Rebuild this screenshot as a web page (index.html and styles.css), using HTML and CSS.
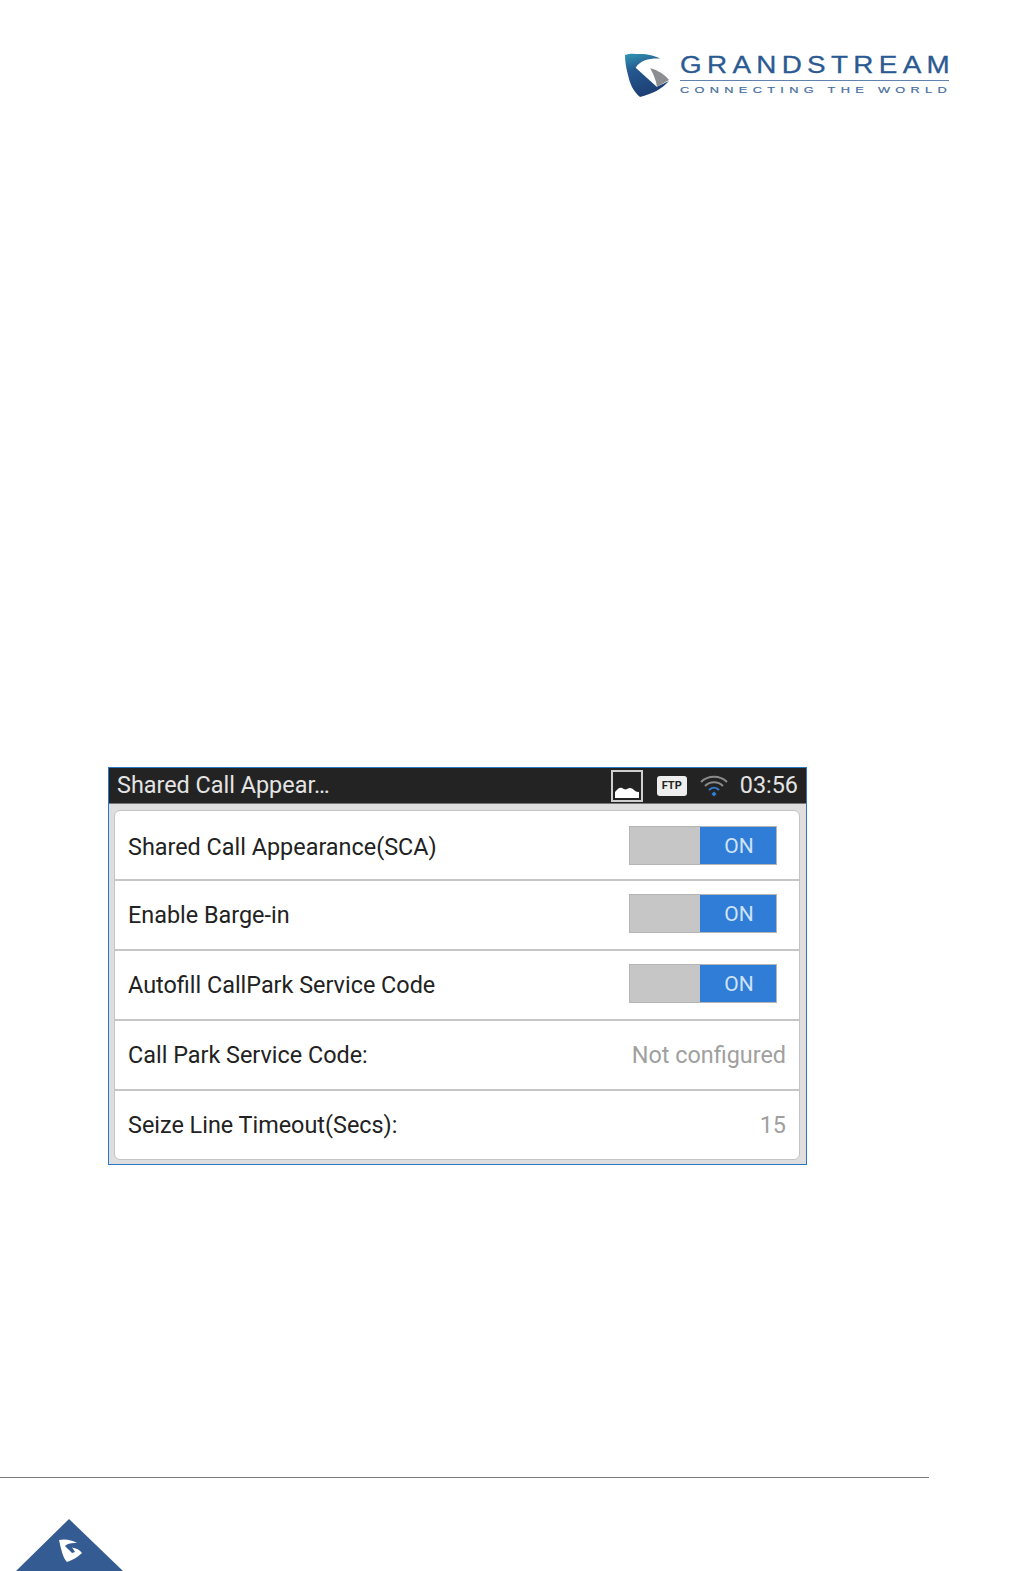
FILE: index.html
```html
<!DOCTYPE html>
<html lang="en">
<head>
    <meta charset="UTF-8">
    <title>Shared Call Appearance</title>
    <link rel="stylesheet" href="styles.css">
</head>
<body>
    <header class="page-header">
        <div class="logo">
            <svg class="logo-mark" width="46" height="48" viewBox="0 0 46 48">
                <defs>
                    <linearGradient id="markBlue" x1="0.2" y1="0" x2="0.5" y2="1">
                        <stop offset="0" stop-color="#2f8fae"/>
                        <stop offset="0.35" stop-color="#24588f"/>
                        <stop offset="1" stop-color="#1d3d72"/>
                    </linearGradient>
                </defs>
                <path d="M1 4 C6 2 11 3 16 3 C24 3 31 5 36 7.500 C26 7 16 9 11.700 16.700 L32.700 35.700 L45 30 C38 38 28 43 16 46 C9 40 6 33 4 24 C2 17 1 10 1 4 Z" fill="url(#markBlue)"/>
                <path d="M26 17.300 C34 19 41 24 45 29 L33 35.700 C32 29 29 22 26 17.300 Z" fill="#8b8d90"/>
            </svg>
            <div class="logo-text">
                <div class="logo-name"><span class="logo-name-text">GRANDSTREAM</span></div>
                <div class="logo-tag"><span class="logo-tag-text">CONNECTING THE WORLD</span></div>
            </div>
        </div>
    </header>

    <main class="content">
        <div class="phone-screen">
            <div class="status-bar">
                <span class="screen-title">Shared Call Appear…</span>
                <div class="status-icons">
                    <svg class="icon-picture" width="32" height="32" viewBox="0 0 32 32">
                        <rect x="1" y="1" width="30" height="30" fill="none" stroke="#cfcfcf" stroke-width="2"/>
                        <path d="M4 28 V22 C7 18 9 17 11 18 C13 19 14 20 16 19 C19 17 21 18 23 20 C25 22 27 22 28 22 V28 Z" fill="#fff"/>
                    </svg>
                    <span class="icon-ftp">FTP</span>
                    <svg class="icon-wifi" width="30" height="24" viewBox="0 0 30 24">
                        <path d="M2 8 C9 1 21 1 28 8" fill="none" stroke="#8a8a8a" stroke-width="2"/>
                        <path d="M6 12 C11 7 19 7 24 12" fill="none" stroke="#8a8a8a" stroke-width="2"/>
                        <path d="M10 16 C13 13 17 13 20 16" fill="none" stroke="#2f80d8" stroke-width="2"/>
                        <path d="M12.500 20 L15 17.500 L17.500 20 L15 22.500 Z" fill="#2f80d8"/>
                    </svg>
                    <span class="clock">03:56</span>
                </div>
            </div>
            <div class="settings-card">
                <div class="row">
                    <span class="row-label">Shared Call Appearance(SCA)</span>
                    <div class="toggle"><span class="toggle-on">ON</span></div>
                </div>
                <div class="row">
                    <span class="row-label">Enable Barge-in</span>
                    <div class="toggle"><span class="toggle-on">ON</span></div>
                </div>
                <div class="row">
                    <span class="row-label">Autofill CallPark Service Code</span>
                    <div class="toggle"><span class="toggle-on">ON</span></div>
                </div>
                <div class="row">
                    <span class="row-label">Call Park Service Code:</span>
                    <span class="row-value">Not configured</span>
                </div>
                <div class="row">
                    <span class="row-label">Seize Line Timeout(Secs):</span>
                    <span class="row-value">15</span>
                </div>
            </div>
        </div>
    </main>

    <footer class="page-footer">
        <svg class="footer-mark" width="107" height="52" viewBox="0 0 107 52">
            <path d="M53 0 L107 52 L0 52 Z" fill="#355c92"/>
            <path d="M43 21 C49 19.500 56 21 61 24 C56 23.500 51 24.500 49 27 C51 29 54 32 56 34 L59 33 C58 31 57 30 56 28.500 C60 29 64 31 66 34 C62 38 57 41 51 43 C47 39 45 30 43 21 Z" fill="#fff"/>
        </svg>
    </footer>
</body>
</html>
```

FILE: styles.css
```css
html, body {
    margin: 0;
    padding: 0;
    background: #fff;
}

body {
    width: 1015px;
    height: 1571px;
    overflow: hidden;
    display: flex;
    flex-direction: column;
    font-family: 'Roboto', sans-serif;
}

.page-header {
    display: flex;
    justify-content: flex-end;
    height: 767px;
    padding: 51px 66px 0 0;
    box-sizing: border-box;
}

.logo {
    display: flex;
    gap: 10px;
    align-items: flex-start;
    height: 50px;
}

.logo-text {
    width: 269px;
}

.logo-name {
    height: 29px;
    border-bottom: 1px solid #5f83ad;
    font-family: 'Liberation Sans', sans-serif;
    font-size: 23px;
    line-height: 29px;
    color: #2b5a92;
    white-space: nowrap;
}

.logo-name-text {
    display: inline-block;
    letter-spacing: 4.400px;
    transform: scaleX(1.21);
    transform-origin: left center;
    -webkit-text-stroke: 0.3px #2b5a92;
}

.logo-tag {
    margin-top: 3px;
    font-family: 'Liberation Sans', sans-serif;
    font-size: 8.500px;
    line-height: 13px;
    color: #4a6f9e;
    white-space: nowrap;
}

.logo-tag-text {
    display: inline-block;
    letter-spacing: 3.550px;
    transform: scaleX(1.5);
    transform-origin: left center;
    -webkit-text-stroke: 0.2px #4a6f9e;
}

.content {
    flex: 1;
    padding-left: 108px;
}

.phone-screen {
    width: 699px;
    height: 398px;
    box-sizing: border-box;
    border: 1px solid #2a78bd;
    background: #dedede;
}

.status-bar {
    height: 35px;
    background: #232323;
    border-bottom: 1px solid #777;
    display: flex;
    justify-content: space-between;
    align-items: center;
    padding: 0 8px 0 8px;
    color: #e4e4e4;
}

.screen-title {
    font-size: 23.400px;
    margin-top: -2px;
}

.status-icons {
    display: flex;
    align-items: center;
}

.icon-picture {
    margin-right: 14px;
}

.icon-ftp {
    width: 30px;
    height: 20px;
    line-height: 20px;
    margin-right: 12px;
    border-radius: 3px;
    background: #eee;
    color: #222;
    font-size: 11px;
    font-weight: 700;
    text-align: center;
}

.icon-wifi {
    margin-right: 11px;
}

.clock {
    font-size: 23.400px;
    margin-top: -2px;
}

.settings-card {
    margin: 6px 6px 0 5px;
    height: 350px;
    box-sizing: border-box;
    background: #fff;
    border: 1px solid #c4c4c4;
    border-radius: 6px;
}

.row {
    height: 70px;
    box-sizing: border-box;
    padding: 0 13px 0 13px;
    border-bottom: 2px solid #c6c6c6;
    display: flex;
    justify-content: space-between;
    align-items: center;
}

.row:last-child {
    height: 68px;
    border-bottom: none;
}

.row:first-child .row-label {
    margin-top: 3px;
}

.row + .row .toggle {
    margin-top: -3px;
}

.row-label {
    font-size: 23.400px;
    color: #222;
}

.row-value {
    font-size: 23.400px;
    color: #a0a0a0;
}

.toggle {
    width: 148px;
    height: 39px;
    margin-right: 9px;
    box-sizing: border-box;
    border: 1px solid #b5b5b5;
    background: #c6c6c6;
    display: flex;
    justify-content: flex-end;
}

.toggle-on {
    width: 76px;
    padding-left: 2px;
    box-sizing: border-box;
    background: #2f7dd6;
    color: #cfe2f7;
    font-size: 21px;
    line-height: 39px;
    text-align: center;
}

.page-footer {
    height: 94px;
    width: 929px;
    box-sizing: border-box;
    border-top: 1px solid #7b7b7b;
    padding: 41px 0 0 16px;
}

.footer-mark {
    display: block;
}
```
